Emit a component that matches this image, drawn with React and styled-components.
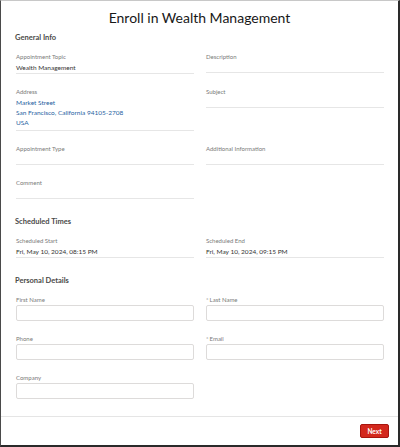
import styled, { createGlobalStyle } from "styled-components";

const GlobalStyle = createGlobalStyle`
  html, body {
    margin: 0;
    padding: 0;
    background: #ffffff;
  }
  * {
    box-sizing: border-box;
  }
`;

// 상담 신청 폼 - 필드 정의
const generalFields = [
  { label: "Appointment Topic", value: "Wealth Management" },
  { label: "Description" },
  {
    label: "Address",
    lines: ["Market Street", "San Francisco, California 94105-2708", "USA"],
  },
  { label: "Subject" },
  { label: "Appointment Type" },
  { label: "Additional Information" },
  { label: "Comment" },
];

const scheduleFields = [
  { label: "Scheduled Start", value: "Fri, May 10, 2024, 08:15 PM" },
  { label: "Scheduled End", value: "Fri, May 10, 2024, 09:15 PM" },
];

const personalFields = [
  { label: "First Name" },
  { label: "Last Name", required: true },
  { label: "Phone" },
  { label: "Email", required: true },
  { label: "Company" },
];

const ReadField = ({ label, value, lines }) => (
  <Field>
    <Label>{label}</Label>
    {lines ? (
      <Value $multi>
        {lines.map((line) => (
          <AddressLine key={line}>{line}</AddressLine>
        ))}
      </Value>
    ) : (
      <Value>{value}</Value>
    )}
  </Field>
);

const InputField = ({ label, required }) => (
  <Field>
    <Label>
      {required && <Required>*</Required>}
      {label}
    </Label>
    <Input type="text" />
  </Field>
);

const App = () => {
  return (
    <>
      <GlobalStyle />
      <Frame>
        <Title>Enroll in Wealth Management</Title>
        <Body>
          <Section>
            <SectionTitle>General Info</SectionTitle>
            <FieldGrid>
              {generalFields.map((f) => (
                <ReadField key={f.label} {...f} />
              ))}
            </FieldGrid>
          </Section>
          <Section>
            <SectionTitle>Scheduled Times</SectionTitle>
            <FieldGrid>
              {scheduleFields.map((f) => (
                <ReadField key={f.label} {...f} />
              ))}
            </FieldGrid>
          </Section>
          <Section>
            <SectionTitle>Personal Details</SectionTitle>
            <FieldGrid>
              {personalFields.map((f) => (
                <InputField key={f.label} {...f} />
              ))}
            </FieldGrid>
          </Section>
        </Body>
        <Footer>
          <NextButton>Next</NextButton>
        </Footer>
      </Frame>
    </>
  );
};

//////////////////////////////////////// Styled-Components
const Frame = styled.div`
  width: 400px;
  height: 447px;
  display: flex;
  flex-direction: column;
  background: #fff;
  border-left: 1px solid #4a4a4a;
  border-top: 1px solid #c8c8c8;
  border-right: 2px solid #2a2a2a;
  border-bottom: 2px solid #2a2a2a;
  font-family: Lato, "Liberation Sans", sans-serif;
  color: #181818;
`;

const Title = styled.h1`
  margin: 0;
  padding-top: 8px;
  font-size: 14px;
  line-height: 18px;
  font-weight: 400;
  text-align: center;
  color: #181818;
`;

const Body = styled.div`
  flex: 1;
  padding: 0 14px 0 15px;
`;

const Section = styled.section`
  margin-top: 18px;

  &:first-child {
    margin-top: 6px;
  }
`;

const SectionTitle = styled.h2`
  margin: 0 0 10px -1px;
  font-size: 7.5px;
  line-height: 10px;
  font-weight: 700;
  color: #4a4a48;
`;

const FieldGrid = styled.div`
  display: grid;
  grid-template-columns: 1fr 1fr;
  column-gap: 12px;
  row-gap: 14px;
  align-items: start;
`;

const Field = styled.div`
  display: flex;
  flex-direction: column;
`;

const Label = styled.div`
  font-size: 6px;
  line-height: 8px;
  color: #7a7a7a;
  margin-bottom: 1px;
`;

const Required = styled.span`
  color: #8a8a8a;
  margin-right: 1px;
`;

// 읽기 전용 값: 빈 값이어도 밑줄 높이는 유지
const Value = styled.div`
  min-height: 11px;
  font-size: 6.5px;
  line-height: 10px;
  padding-top: 1px;
  padding-bottom: ${(p) => (p.$multi ? "2px" : "0")};
  border-bottom: 1px solid #e6e6e6;
  color: #333333;
`;

const AddressLine = styled.div`
  color: #1f5f9f;
`;

const Input = styled.input`
  height: 16px;
  width: 100%;
  margin: 0;
  border: 1px solid #dddbda;
  border-radius: 2px;
  background: #fff;
  padding: 0 4px;
  font-family: inherit;
  font-size: 7px;
  outline: none;
`;

const Footer = styled.div`
  display: flex;
  justify-content: flex-end;
  border-top: 1px solid #e5e5e5;
  padding: 7px 9px 7px 0;
`;

const NextButton = styled.button`
  width: 29px;
  height: 14px;
  padding: 0;
  border: 1px solid #a8150e;
  border-radius: 2px;
  background: #d3281d;
  color: #fff;
  font-family: inherit;
  font-size: 6.5px;
  font-weight: 700;
  cursor: pointer;
`;

export default App;
